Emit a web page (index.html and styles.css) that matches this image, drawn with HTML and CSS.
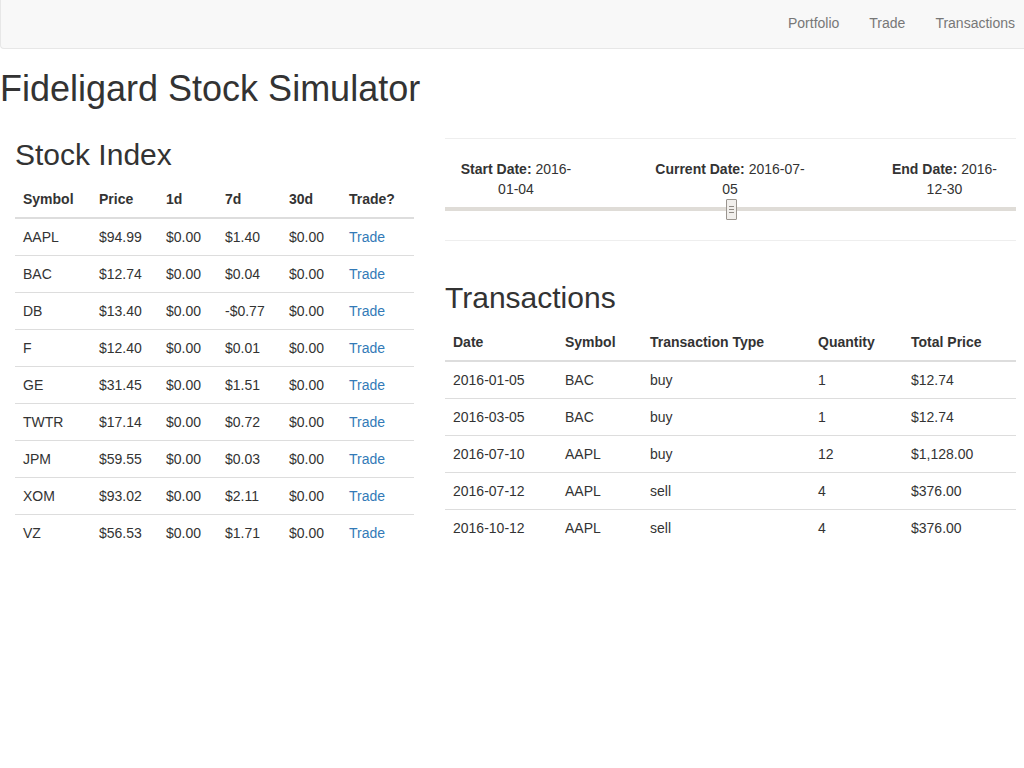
FILE: index.html
```html
<!DOCTYPE html>
<html>
<head>
<meta charset="utf-8">
<title>Fideligard Stock Simulator</title>
<link rel="stylesheet" href="styles.css">
</head>
<body>
<nav class="navbar">
  <ul class="nav-links">
    <li><a href="#">Portfolio</a></li>
    <li><a href="#">Trade</a></li>
    <li><a href="#">Transactions</a></li>
  </ul>
</nav>
<h1 class="title">Fideligard Stock Simulator</h1>
<div class="columns">
  <section class="col-left">
    <h2>Stock Index</h2>
    <table class="table stocks">
      <thead>
        <tr><th>Symbol</th><th>Price</th><th>1d</th><th>7d</th><th>30d</th><th>Trade?</th></tr>
      </thead>
      <tbody>
        <tr><td>AAPL</td><td>$94.99</td><td>$0.00</td><td>$1.40</td><td>$0.00</td><td><a href="#">Trade</a></td></tr>
        <tr><td>BAC</td><td>$12.74</td><td>$0.00</td><td>$0.04</td><td>$0.00</td><td><a href="#">Trade</a></td></tr>
        <tr><td>DB</td><td>$13.40</td><td>$0.00</td><td>-$0.77</td><td>$0.00</td><td><a href="#">Trade</a></td></tr>
        <tr><td>F</td><td>$12.40</td><td>$0.00</td><td>$0.01</td><td>$0.00</td><td><a href="#">Trade</a></td></tr>
        <tr><td>GE</td><td>$31.45</td><td>$0.00</td><td>$1.51</td><td>$0.00</td><td><a href="#">Trade</a></td></tr>
        <tr><td>TWTR</td><td>$17.14</td><td>$0.00</td><td>$0.72</td><td>$0.00</td><td><a href="#">Trade</a></td></tr>
        <tr><td>JPM</td><td>$59.55</td><td>$0.00</td><td>$0.03</td><td>$0.00</td><td><a href="#">Trade</a></td></tr>
        <tr><td>XOM</td><td>$93.02</td><td>$0.00</td><td>$2.11</td><td>$0.00</td><td><a href="#">Trade</a></td></tr>
        <tr><td>VZ</td><td>$56.53</td><td>$0.00</td><td>$1.71</td><td>$0.00</td><td><a href="#">Trade</a></td></tr>
      </tbody>
    </table>
  </section>
  <section class="col-right">
    <hr class="rule">
    <div class="dates">
      <div class="date date-start"><strong>Start Date:</strong> 2016-01-04</div>
      <div class="date date-current"><strong>Current Date:</strong> 2016-07-05</div>
      <div class="date date-end"><strong>End Date:</strong> 2016-12-30</div>
    </div>
    <div class="slider">
      <div class="track"></div>
      <div class="handle" style="left: 281px;"><span></span><span></span><span></span></div>
    </div>
    <hr class="rule rule-end">
    <h2>Transactions</h2>
    <table class="table transactions">
      <thead>
        <tr><th>Date</th><th>Symbol</th><th>Transaction Type</th><th>Quantity</th><th>Total Price</th></tr>
      </thead>
      <tbody>
        <tr><td>2016-01-05</td><td>BAC</td><td>buy</td><td>1</td><td>$12.74</td></tr>
        <tr><td>2016-03-05</td><td>BAC</td><td>buy</td><td>1</td><td>$12.74</td></tr>
        <tr><td>2016-07-10</td><td>AAPL</td><td>buy</td><td>12</td><td>$1,128.00</td></tr>
        <tr><td>2016-07-12</td><td>AAPL</td><td>sell</td><td>4</td><td>$376.00</td></tr>
        <tr><td>2016-10-12</td><td>AAPL</td><td>sell</td><td>4</td><td>$376.00</td></tr>
      </tbody>
    </table>
  </section>
</div>
</body>
</html>
```

FILE: styles.css
```css
* { box-sizing: border-box; }
html, body { margin: 0; padding: 0; }
body {
  font-family: "Liberation Sans", Arial, Helvetica, sans-serif;
  font-size: 14px;
  line-height: 20px;
  color: #333;
  background: #fff;
}
a { color: #337ab7; text-decoration: none; }

.navbar {
  height: 49px;
  background: #f8f8f8;
  border-left: 1px solid #e7e7e7;
  border-bottom: 1px solid #e7e7e7;
  border-bottom-left-radius: 4px;
  display: flex;
  justify-content: flex-end;
}
.nav-links {
  list-style: none;
  margin: 0;
  padding: 0 9px 0 0;
  display: flex;
}
.nav-links a {
  display: block;
  padding: 13px 15px 15px;
  line-height: 20px;
  color: #777;
}
.nav-links li:last-child a { padding-right: 0; }

.title {
  font-size: 36px;
  font-weight: 500;
  line-height: 39.6px;
  margin: 20px 0 9px;
}

h2 {
  font-size: 30px;
  font-weight: 500;
  line-height: 33px;
  margin: 20px 0 10px;
}

.columns {
  display: flex;
  padding: 0 8px 0 15px;
  gap: 31px;
}
.col-left { width: 399px; flex: none; }
.col-right { width: 571px; flex: none; }

.rule {
  border: 0;
  border-top: 1px solid #eee;
  margin: 20px 0;
  height: 0;
}
.rule-end { margin-bottom: 40px; }

.table {
  width: 100%;
  border-collapse: collapse;
  border-spacing: 0;
}
.table th, .table td {
  padding: 8px;
  line-height: 20px;
  text-align: left;
  vertical-align: top;
}
.table th {
  font-weight: bold;
  border-bottom: 2px solid #ddd;
}
.table td { border-top: 1px solid #ddd; }
.table tbody tr:first-child td { border-top: 0; }

.stocks th:nth-child(1) { width: 76px; }
.stocks th:nth-child(2) { width: 67px; }
.stocks th:nth-child(3) { width: 59px; }
.stocks th:nth-child(4) { width: 64px; }
.stocks th:nth-child(5) { width: 60px; }

.transactions th:nth-child(1) { width: 112px; }
.transactions th:nth-child(2) { width: 85px; }
.transactions th:nth-child(3) { width: 168px; }
.transactions th:nth-child(4) { width: 93px; }

.dates {
  display: flex;
  align-items: flex-start;
}
.date { text-align: center; flex: none; }
.date-start { width: 120px; margin-left: 11px; }
.date-current { width: 156px; margin-left: 76px; }
.date-end { width: 115px; margin-left: 79px; }

.slider {
  position: relative;
  height: 21px;
}
.track {
  position: absolute;
  left: 0;
  right: 0;
  top: 8px;
  height: 4px;
  background: #dfdcd7;
}
.handle {
  position: absolute;
  top: 0;
  width: 11px;
  height: 21px;
  background: #f1efec;
  border: 1px solid #9a958f;
  border-radius: 1px;
  display: flex;
  flex-direction: column;
  align-items: center;
  justify-content: center;
  gap: 2px;
}
.handle span {
  display: block;
  width: 5px;
  height: 1px;
  background: #8f8a84;
}
```
